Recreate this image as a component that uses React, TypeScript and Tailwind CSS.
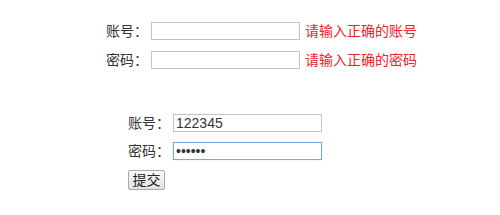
import React from "react";

const font = { fontFamily: '"Liberation Sans", "Noto Sans CJK SC", sans-serif' };

function Field({
  label,
  value,
  type = "text",
  focused = false,
  error,
}: {
  label: string;
  value?: string;
  type?: string;
  focused?: boolean;
  error?: string;
}) {
  return (
    <div className="flex items-center h-[18px]">
      <span className="w-[45px] shrink-0 text-[14px] leading-[18px] text-[#333]">{label}</span>
      <input
        type={type}
        defaultValue={value}
        readOnly
        className={
          focused
            ? "w-[149px] h-[18px] border border-[#7aa7e6] bg-white px-[2px] text-[14px] leading-[16px] text-[#333] outline-none shadow-[0_0_1px_#9cc0f0]"
            : "w-[149px] h-[18px] border border-[#c3c3c3] bg-white px-[2px] text-[14px] leading-[16px] text-[#333] outline-none"
        }
      />
      {error && <span className="ml-[5px] text-[14px] leading-[18px] text-[#f0222a] whitespace-nowrap">{error}</span>}
    </div>
  );
}

export default function App() {
  return (
    <div className="w-[500px] h-[215px] bg-white overflow-hidden" style={font}>
      <div className="pt-[22px] pl-[106px] flex flex-col gap-[11px]">
        <Field label="账号：" error="请输入正确的账号" />
        <Field label="密码：" error="请输入正确的密码" />
      </div>
      <div className="mt-[45px] pl-[128px] flex flex-col gap-[10px]">
        <Field label="账号：" value="122345" />
        <Field label="密码：" value="123456" type="password" focused />
        <div className="-mt-[2px]">
          <button className="w-[37px] h-[20px] border border-[#a8a8a8] rounded-[2px] bg-gradient-to-b from-[#fafafa] to-[#e2e2e2] text-[14px] leading-[18px] text-[#222]">
            提交
          </button>
        </div>
      </div>
    </div>
  );
}
